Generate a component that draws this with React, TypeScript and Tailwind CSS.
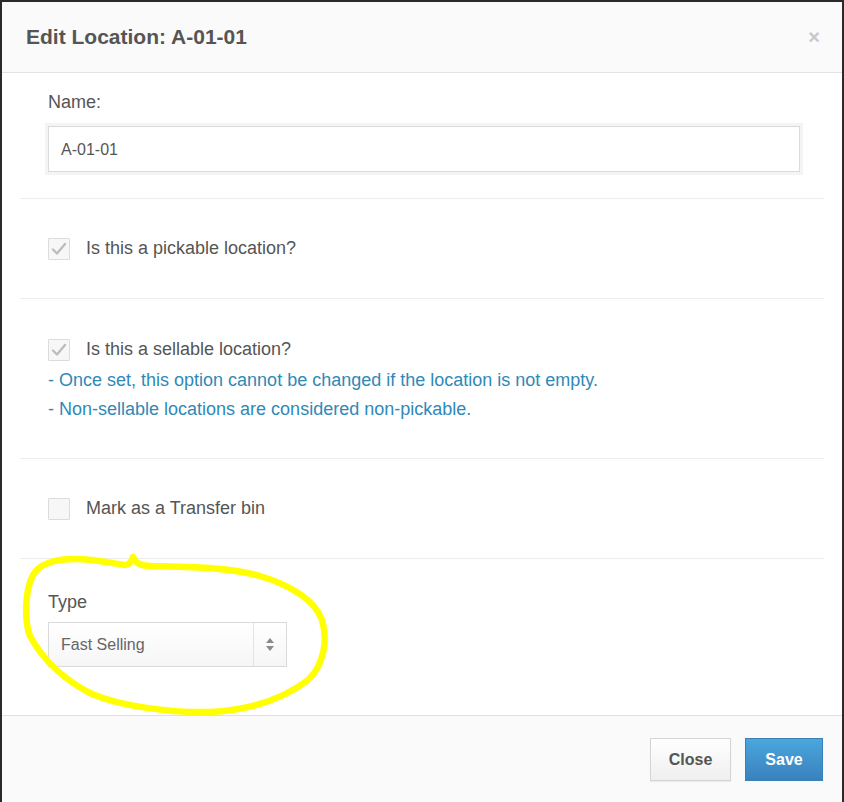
import React from "react";

function Check({ checked }: { checked: boolean }) {
  return (
    <div className="w-[22px] h-[22px] border border-[#dcdcdc] bg-[#f7f7f7] rounded-[1px] flex items-center justify-center shrink-0">
      {checked && (
        <svg width="16" height="14" viewBox="0 0 16 14">
          <path d="M2 7.5 L6 11.5 L14 2" fill="none" stroke="#bdbdbd" strokeWidth="2.4" strokeLinecap="round" strokeLinejoin="round" />
        </svg>
      )}
    </div>
  );
}

export default function App() {
  const font = { fontFamily: '"Liberation Sans", Arial, Helvetica, sans-serif' };
  return (
    <div className="w-[844px] h-[802px] bg-[#2a2a2a] pt-[2px] pl-[2px] pr-[2px] relative" style={font}>
      <div className="w-[840px] h-[800px] bg-white flex flex-col">
        {/* Header */}
        <div className="h-[71px] bg-[#fafafa] border-b border-[#e3e3e3] flex items-center justify-between pl-[24px] pr-[22px]">
          <div className="text-[21px] font-bold text-[#555]">Edit Location: A-01-01</div>
          <div className="text-[20px] text-[#c8c8c8] font-bold leading-none">×</div>
        </div>
        {/* Body */}
        <div className="flex-1 px-[18px] flex flex-col">
          <div className="h-[126px] border-b border-[#ececec] pl-[28px] pr-[24px] pt-[17px]">
            <div className="text-[18px] text-[#555] leading-[24px]">Name:</div>
            <div className="mt-[12px] h-[46px] border border-[#dadada] bg-white shadow-[0_0_0_3px_#f4f4f4] flex items-center pl-[12px] pt-[2px] text-[16px] text-[#555]">
              A-01-01
            </div>
          </div>
          <div className="h-[100px] border-b border-[#ececec] pl-[28px] flex items-center gap-[16px]">
            <Check checked />
            <span className="text-[18px] text-[#555]">Is this a pickable location?</span>
          </div>
          <div className="h-[160px] border-b border-[#ececec] pl-[28px] pt-[37px]">
            <div className="flex items-center gap-[16px]">
              <Check checked />
              <span className="text-[18px] text-[#555]">Is this a sellable location?</span>
            </div>
            <div className="mt-[3px] text-[18px] leading-[29px] text-[#2f89b8]">
              <div>- Once set, this option cannot be changed if the location is not empty.</div>
              <div>- Non-sellable locations are considered non-pickable.</div>
            </div>
          </div>
          <div className="h-[100px] border-b border-[#ececec] pl-[28px] flex items-center gap-[16px]">
            <Check checked={false} />
            <span className="text-[18px] text-[#555]">Mark as a Transfer bin</span>
          </div>
          <div className="flex-1 pl-[28px] pt-[31px]">
            <div className="text-[18px] text-[#555] leading-[24px]">Type</div>
            <div className="mt-[8px] w-[239px] h-[45px] border border-[#dadada] bg-gradient-to-b from-white to-[#f6f6f6] flex">
              <div className="flex-1 flex items-center pl-[12px] pt-[1px] text-[16px] text-[#666]">Fast Selling</div>
              <div className="w-[33px] border-l border-[#e3e3e3] flex flex-col items-center justify-center gap-[3px]">
                <svg width="8" height="5" viewBox="0 0 8 5"><path d="M4 0 L8 5 L0 5 Z" fill="#8a8a8a" /></svg>
                <svg width="8" height="5" viewBox="0 0 8 5"><path d="M0 0 L8 0 L4 5 Z" fill="#8a8a8a" /></svg>
              </div>
            </div>
          </div>
        </div>
        {/* Footer */}
        <div className="h-[87px] bg-[#fafafa] border-t border-[#e0e0e0] flex items-start justify-end pt-[22px] pr-[19px] gap-[14px]">
          <button className="w-[81px] h-[43px] border border-[#d4d4d4] bg-gradient-to-b from-white to-[#efefef] text-[16px] font-bold text-[#555] shadow-[0_1px_1px_rgba(0,0,0,0.06)]">
            Close
          </button>
          <button className="w-[78px] h-[43px] border border-[#3b7fb8] bg-gradient-to-b from-[#4aa7dd] to-[#3981bd] text-[16px] font-bold text-white">
            Save
          </button>
        </div>
      </div>
      {/* Yellow hand-drawn annotation */}
      <svg className="absolute left-0 top-0 pointer-events-none" width="844" height="802" viewBox="0 0 844 802">
        <path
          d="M133 557 C135 562 140 566 150 566 C190 567 230 567 260 576 C290 585 315 600 322 620 C328 640 324 665 308 680 C282 700 250 710 210 712 C170 713 120 706 92 694 C60 678 42 658 30 636 C24 620 25 590 33 575 C40 563 55 559 75 559 C95 559 110 563 125 565 C130 565 132 560 133 557"
          fill="none"
          stroke="#ffff00"
          strokeWidth="6.5"
          strokeLinejoin="round"
          strokeLinecap="round"
        />
      </svg>
    </div>
  );
}
